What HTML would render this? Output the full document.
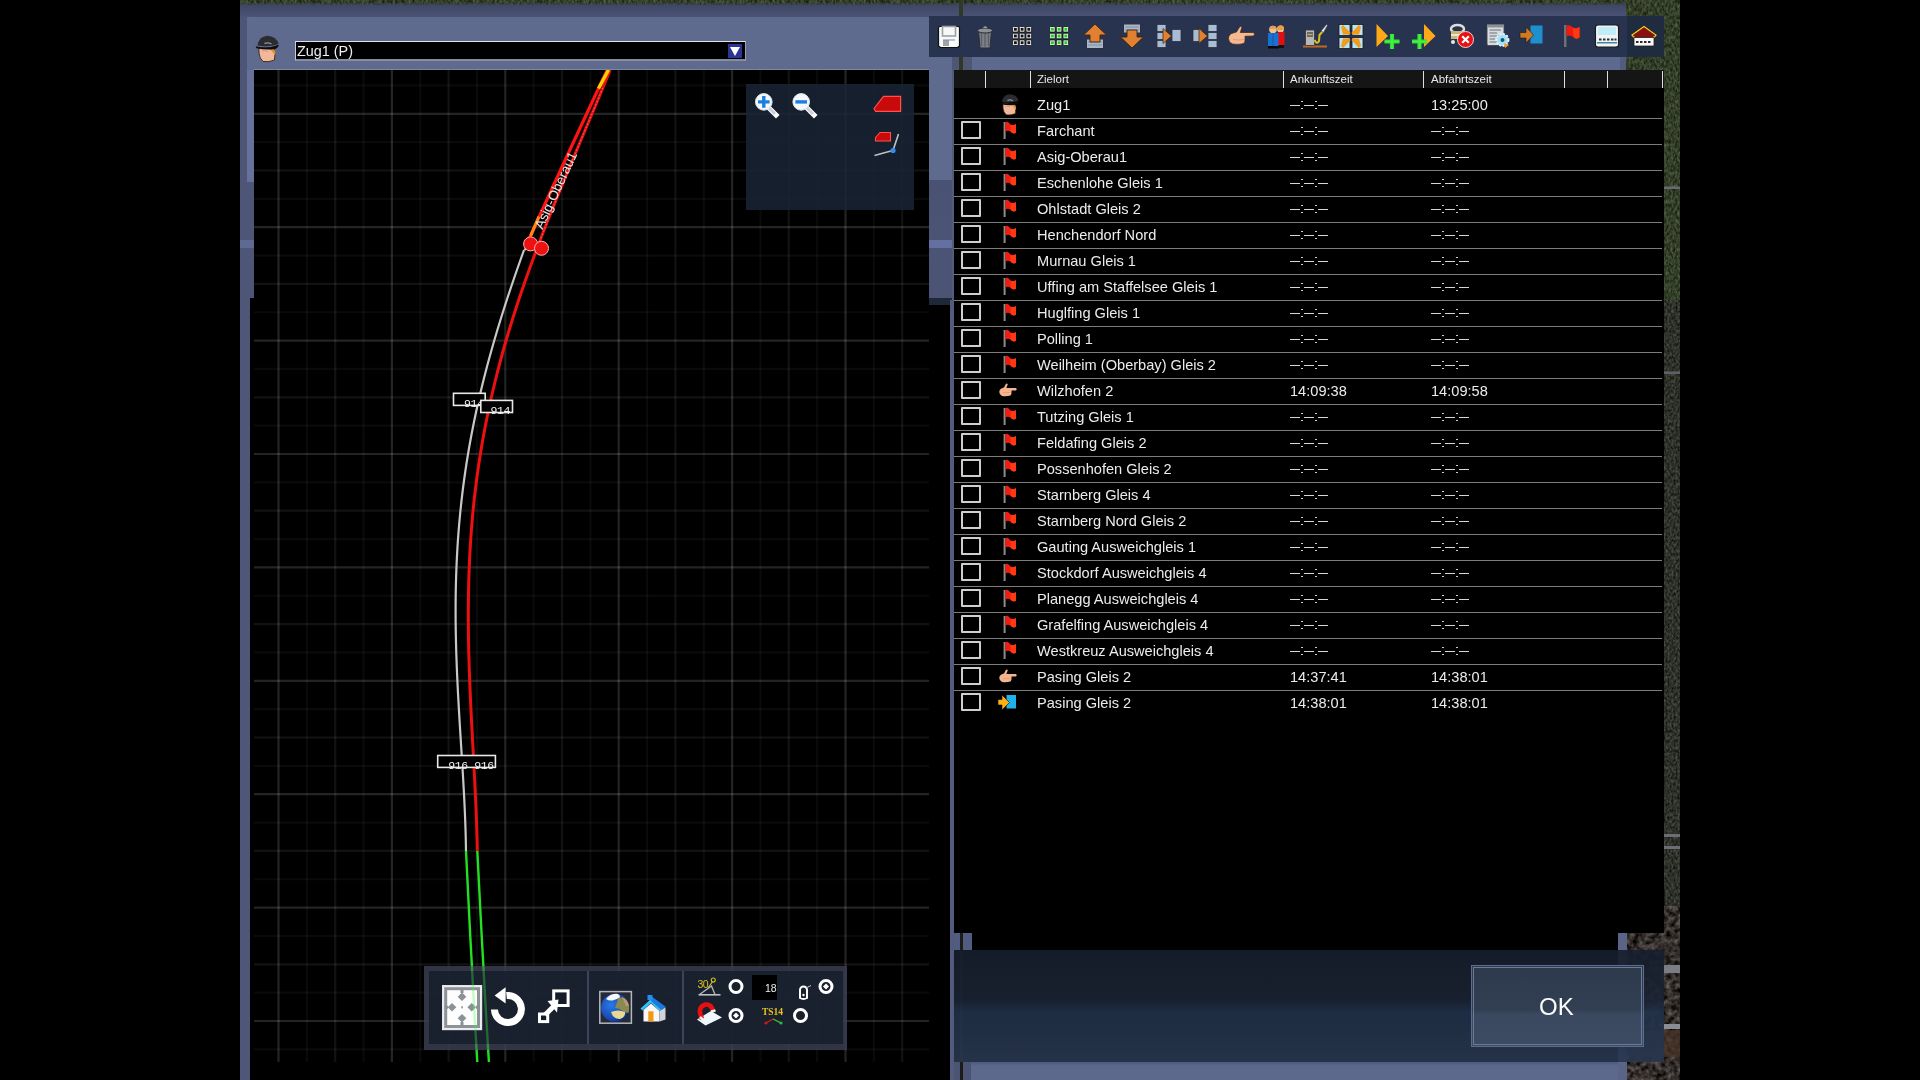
<!DOCTYPE html><html><head><meta charset="utf-8"><style>
*{margin:0;padding:0;box-sizing:border-box}
html,body{width:1920px;height:1080px;overflow:hidden;background:#000;font-family:"Liberation Sans",sans-serif}
.ab{position:absolute}
.dash{width:40px;height:12px}.dash i{position:absolute;top:4.8px;width:10px;height:1.3px;background:#d6d6d6}.dash u{position:absolute;width:2px;height:8.6px;top:0.6px;background:linear-gradient(#d0d0d0 0,#d0d0d0 1.5px,transparent 1.5px,transparent 7.1px,#d0d0d0 7.1px)}
.t{position:absolute;color:#ececec;white-space:nowrap;font-size:14.6px;line-height:16px}
</style></head><body>
<svg class="ab" style="left:0;top:0" width="1920" height="1080" viewBox="0 0 1920 1080">
<defs>
<filter id="fg" x="0" y="0" width="100%" height="100%" color-interpolation-filters="sRGB"><feTurbulence type="fractalNoise" baseFrequency="0.45 0.25" numOctaves="3" seed="7"/>
<feColorMatrix values="0.36 0 0 0 0.02  0.44 0 0 0 0.025  0.28 0 0 0 0.02  0 0 0 0 1"/></filter>
<filter id="fd" x="0" y="0" width="100%" height="100%" color-interpolation-filters="sRGB"><feTurbulence type="fractalNoise" baseFrequency="0.5 0.3" numOctaves="3" seed="11"/>
<feColorMatrix values="0.36 0 0 0 0.0  0.38 0 0 0 0.0  0.32 0 0 0 0.0  0 0 0 0 1"/></filter>
<filter id="fr" x="0" y="0" width="100%" height="100%" color-interpolation-filters="sRGB"><feTurbulence type="fractalNoise" baseFrequency="0.18" numOctaves="3" seed="5"/>
<feColorMatrix values="0.6 0 0 0 -0.1  0.56 0 0 0 -0.1  0.54 0 0 0 -0.1  0 0 0 0 1"/></filter>
</defs>
<rect x="240" y="0" width="1440" height="8" filter="url(#fg)"/>
<rect x="1620" y="0" width="60" height="300" filter="url(#fg)"/>
<rect x="1664" y="300" width="16" height="606" filter="url(#fd)"/>
<rect x="1664" y="906" width="16" height="30" filter="url(#fr)"/>
<rect x="1618" y="933" width="62" height="147" filter="url(#fr)"/>
<rect x="1664" y="186.5" width="16" height="2.5" fill="#666a70"/>
<rect x="1664" y="371.5" width="16" height="2.5" fill="#5e6268"/>
<rect x="1664" y="834" width="16" height="3" fill="#6a6e74"/>
<rect x="1664" y="846" width="16" height="3" fill="#6a6e74"/>
<rect x="1664" y="965" width="16" height="8" fill="#7a7e84"/>
<rect x="1664" y="1024" width="16" height="5" fill="#8a8e94"/>
<rect x="1626" y="1030" width="54" height="27" fill="#4a3428" opacity="0.7"/>
</svg><div class="ab" style="left:240px;top:2px;width:1386px;height:4px;background:linear-gradient(rgba(62,70,100,0),rgba(62,70,100,0.9))"></div><div class="ab" style="left:240px;top:5px;width:720px;height:12px;background:linear-gradient(#3f4766,#4a5374)"></div><div class="ab" style="left:240px;top:16px;width:14px;height:282px;background:linear-gradient(#4d5676 0,#4d5676 224px,#5e6a92 224px,#5e6a92 232px,#4d5676 232px)"></div><div class="ab" style="left:247px;top:17px;width:712px;height:53px;background:#5e6a8e"></div><div class="ab" style="left:247px;top:70px;width:7px;height:112px;background:#66729a"></div><div class="ab" style="left:240px;top:298px;width:10px;height:782px;background:#4e5778"></div><div class="ab" style="left:929px;top:57px;width:23px;height:248px;background:linear-gradient(#5e6a8e 0,#5e6a8e 123px,#4a5274 123px,#4c5476 183px,#6470a0 183px,#6470a0 191px,#4c5476 191px,#4c5476 241px,#1e2838 241px)"></div><div class="ab" style="left:952px;top:57px;width:2px;height:1023px;background:#525b7c"></div><div class="ab" style="left:950px;top:300px;width:4px;height:780px;background:#525b7c"></div><div class="ab" style="left:254px;top:69px;width:675px;height:1px;background:#7c87a6"></div><div class="ab" style="left:295px;top:41px;width:451px;height:20px;background:#000;border-top:1px solid #dfe2ea;border-left:1px solid #c8ccd8;border-right:1px solid #9aa0b4;border-bottom:2px solid #858ca4"></div><div class="t" style="left:297px;top:43px;font-size:14.4px;color:#f0f0f0">Zug1 (P)</div><div class="ab" style="left:728px;top:44px;width:14px;height:14px;background:#2c3494"></div><svg class="ab" style="left:728px;top:44px" width="14" height="14"><path d="M2 3 L12 3 L7 12 Z" fill="#fff"/></svg><svg class="ab" style="left:254px;top:70px" width="675" height="992" viewBox="254 70 675 992"><line x1="278.50" y1="70" x2="278.50" y2="1062" stroke="#242424" stroke-width="2.2"/><line x1="306.85" y1="70" x2="306.85" y2="1062" stroke="#0a0a0a" stroke-width="2.2"/><line x1="335.20" y1="70" x2="335.20" y2="1062" stroke="#121212" stroke-width="2.2"/><line x1="363.55" y1="70" x2="363.55" y2="1062" stroke="#0a0a0a" stroke-width="2.2"/><line x1="391.90" y1="70" x2="391.90" y2="1062" stroke="#242424" stroke-width="2.2"/><line x1="420.25" y1="70" x2="420.25" y2="1062" stroke="#0a0a0a" stroke-width="2.2"/><line x1="448.60" y1="70" x2="448.60" y2="1062" stroke="#121212" stroke-width="2.2"/><line x1="476.95" y1="70" x2="476.95" y2="1062" stroke="#0a0a0a" stroke-width="2.2"/><line x1="505.30" y1="70" x2="505.30" y2="1062" stroke="#242424" stroke-width="2.2"/><line x1="533.65" y1="70" x2="533.65" y2="1062" stroke="#0a0a0a" stroke-width="2.2"/><line x1="562.00" y1="70" x2="562.00" y2="1062" stroke="#121212" stroke-width="2.2"/><line x1="590.35" y1="70" x2="590.35" y2="1062" stroke="#0a0a0a" stroke-width="2.2"/><line x1="618.70" y1="70" x2="618.70" y2="1062" stroke="#242424" stroke-width="2.2"/><line x1="647.05" y1="70" x2="647.05" y2="1062" stroke="#0a0a0a" stroke-width="2.2"/><line x1="675.40" y1="70" x2="675.40" y2="1062" stroke="#121212" stroke-width="2.2"/><line x1="703.75" y1="70" x2="703.75" y2="1062" stroke="#0a0a0a" stroke-width="2.2"/><line x1="732.10" y1="70" x2="732.10" y2="1062" stroke="#242424" stroke-width="2.2"/><line x1="760.45" y1="70" x2="760.45" y2="1062" stroke="#0a0a0a" stroke-width="2.2"/><line x1="788.80" y1="70" x2="788.80" y2="1062" stroke="#121212" stroke-width="2.2"/><line x1="817.15" y1="70" x2="817.15" y2="1062" stroke="#0a0a0a" stroke-width="2.2"/><line x1="845.50" y1="70" x2="845.50" y2="1062" stroke="#242424" stroke-width="2.2"/><line x1="873.85" y1="70" x2="873.85" y2="1062" stroke="#0a0a0a" stroke-width="2.2"/><line x1="902.20" y1="70" x2="902.20" y2="1062" stroke="#121212" stroke-width="2.2"/><g style="mix-blend-mode:screen"><line x1="254" y1="85.45" x2="929" y2="85.45" stroke="#0a0a0a" stroke-width="2.2"/><line x1="254" y1="113.80" x2="929" y2="113.80" stroke="#242424" stroke-width="2.2"/><line x1="254" y1="142.15" x2="929" y2="142.15" stroke="#0a0a0a" stroke-width="2.2"/><line x1="254" y1="170.50" x2="929" y2="170.50" stroke="#121212" stroke-width="2.2"/><line x1="254" y1="198.85" x2="929" y2="198.85" stroke="#0a0a0a" stroke-width="2.2"/><line x1="254" y1="227.20" x2="929" y2="227.20" stroke="#242424" stroke-width="2.2"/><line x1="254" y1="255.55" x2="929" y2="255.55" stroke="#0a0a0a" stroke-width="2.2"/><line x1="254" y1="283.90" x2="929" y2="283.90" stroke="#121212" stroke-width="2.2"/><line x1="254" y1="312.25" x2="929" y2="312.25" stroke="#0a0a0a" stroke-width="2.2"/><line x1="254" y1="340.60" x2="929" y2="340.60" stroke="#242424" stroke-width="2.2"/><line x1="254" y1="368.95" x2="929" y2="368.95" stroke="#0a0a0a" stroke-width="2.2"/><line x1="254" y1="397.30" x2="929" y2="397.30" stroke="#121212" stroke-width="2.2"/><line x1="254" y1="425.65" x2="929" y2="425.65" stroke="#0a0a0a" stroke-width="2.2"/><line x1="254" y1="454.00" x2="929" y2="454.00" stroke="#242424" stroke-width="2.2"/><line x1="254" y1="482.35" x2="929" y2="482.35" stroke="#0a0a0a" stroke-width="2.2"/><line x1="254" y1="510.70" x2="929" y2="510.70" stroke="#121212" stroke-width="2.2"/><line x1="254" y1="539.05" x2="929" y2="539.05" stroke="#0a0a0a" stroke-width="2.2"/><line x1="254" y1="567.40" x2="929" y2="567.40" stroke="#242424" stroke-width="2.2"/><line x1="254" y1="595.75" x2="929" y2="595.75" stroke="#0a0a0a" stroke-width="2.2"/><line x1="254" y1="624.10" x2="929" y2="624.10" stroke="#121212" stroke-width="2.2"/><line x1="254" y1="652.45" x2="929" y2="652.45" stroke="#0a0a0a" stroke-width="2.2"/><line x1="254" y1="680.80" x2="929" y2="680.80" stroke="#242424" stroke-width="2.2"/><line x1="254" y1="709.15" x2="929" y2="709.15" stroke="#0a0a0a" stroke-width="2.2"/><line x1="254" y1="737.50" x2="929" y2="737.50" stroke="#121212" stroke-width="2.2"/><line x1="254" y1="765.85" x2="929" y2="765.85" stroke="#0a0a0a" stroke-width="2.2"/><line x1="254" y1="794.20" x2="929" y2="794.20" stroke="#242424" stroke-width="2.2"/><line x1="254" y1="822.55" x2="929" y2="822.55" stroke="#0a0a0a" stroke-width="2.2"/><line x1="254" y1="850.90" x2="929" y2="850.90" stroke="#121212" stroke-width="2.2"/><line x1="254" y1="879.25" x2="929" y2="879.25" stroke="#0a0a0a" stroke-width="2.2"/><line x1="254" y1="907.60" x2="929" y2="907.60" stroke="#242424" stroke-width="2.2"/><line x1="254" y1="935.95" x2="929" y2="935.95" stroke="#0a0a0a" stroke-width="2.2"/><line x1="254" y1="964.30" x2="929" y2="964.30" stroke="#121212" stroke-width="2.2"/><line x1="254" y1="992.65" x2="929" y2="992.65" stroke="#0a0a0a" stroke-width="2.2"/><line x1="254" y1="1021.00" x2="929" y2="1021.00" stroke="#242424" stroke-width="2.2"/><line x1="254" y1="1049.35" x2="929" y2="1049.35" stroke="#0a0a0a" stroke-width="2.2"/></g></svg><svg class="ab" style="left:254px;top:70px" width="675" height="992" viewBox="254 70 675 992" fill="none" stroke-linecap="butt"><path d="M610.11 70.00 L608.49 74.00 L606.87 78.00 L605.24 82.00 L603.60 86.00 L601.95 90.00 L600.29 94.00 L598.63 98.00 L596.97 102.00 L595.30 106.00 L593.62 110.00 L591.94 114.00 L590.26 118.00 L588.58 122.00 L586.89 126.00 L585.20 130.00 L583.52 134.00 L581.83 138.00 L580.14 142.00 L578.45 146.00 L576.77 150.00 L575.09 154.00 L573.40 158.00 L571.73 162.00 L570.05 166.00 L568.38 170.00 L566.71 174.00 L565.05 178.00 L563.39 182.00 L561.74 186.00 L560.10 190.00 L558.46 194.00 L556.83 198.00 L555.20 202.00 L553.59 206.00 L551.98 210.00 L550.38 214.00 L548.79 218.00 L547.21 222.00 L545.63 226.00 L544.07 230.00 L542.52 234.00 L540.98 238.00 L539.45 242.00 L537.93 246.00 L536.43 250.00 L534.93 254.00 L533.45 258.00 L531.98 262.00 L530.53 266.00 L529.08 270.00 L527.65 274.00 L526.24 278.00 L524.84 282.00 L523.45 286.00 L522.08 290.00 L520.72 294.00 L519.37 298.00 L518.05 302.00 L516.73 306.00 L515.44 310.00 L514.16 314.00 L512.89 318.00 L511.64 322.00 L510.41 326.00 L509.20 330.00 L508.00 334.00 L506.82 338.00 L505.65 342.00 L504.50 346.00 L503.37 350.00 L502.26 354.00 L501.17 358.00 L500.09 362.00 L499.03 366.00 L497.99 370.00 L496.96 374.00 L495.96 378.00 L494.97 382.00 L494.00 386.00 L493.05 390.00 L492.12 394.00 L491.21 398.00 L490.31 402.00 L489.43 406.00 L488.58 410.00 L487.74 414.00 L486.92 418.00 L486.11 422.00 L485.33 426.00 L484.57 430.00 L483.82 434.00 L483.09 438.00 L482.38 442.00 L481.69 446.00 L481.02 450.00 L480.37 454.00 L479.73 458.00 L479.12 462.00 L478.52 466.00 L477.94 470.00 L477.38 474.00 L476.84 478.00 L476.31 482.00 L475.81 486.00 L475.32 490.00 L474.85 494.00 L474.39 498.00 L473.96 502.00 L473.54 506.00 L473.14 510.00 L472.76 514.00 L472.39 518.00 L472.04 522.00 L471.71 526.00 L471.40 530.00 L471.10 534.00 L470.81 538.00 L470.55 542.00 L470.30 546.00 L470.06 550.00 L469.84 554.00 L469.64 558.00 L469.45 562.00 L469.28 566.00 L469.12 570.00 L468.98 574.00 L468.85 578.00 L468.74 582.00 L468.64 586.00 L468.55 590.00 L468.48 594.00 L468.42 598.00 L468.37 602.00 L468.33 606.00 L468.31 610.00 L468.30 614.00 L468.31 618.00 L468.32 622.00 L468.35 626.00 L468.38 630.00 L468.43 634.00 L468.49 638.00 L468.56 642.00 L468.64 646.00 L468.72 650.00 L468.82 654.00 L468.93 658.00 L469.04 662.00 L469.17 666.00 L469.30 670.00 L469.44 674.00 L469.58 678.00 L469.74 682.00 L469.90 686.00 L470.06 690.00 L470.24 694.00 L470.42 698.00 L470.60 702.00 L470.79 706.00 L470.98 710.00 L471.18 714.00 L471.38 718.00 L471.58 722.00 L471.79 726.00 L472.00 730.00 L472.21 734.00 L472.42 738.00 L472.63 742.00 L472.85 746.00 L473.06 750.00 L473.28 754.00 L473.50 758.00 L473.71 762.00 L473.92 766.00 L474.13 770.00 L474.34 774.00 L474.55 778.00 L474.75 782.00 L474.95 786.00 L475.15 790.00 L475.34 794.00 L475.53 798.00 L475.71 802.00 L475.88 806.00 L476.05 810.00 L476.22 814.00 L476.37 818.00 L476.52 822.00 L476.66 826.00 L476.79 830.00 L476.91 834.00 L477.02 838.00 L477.12 842.00 L477.22 846.00 L477.30 850.00 L477.31 851.00" stroke="#ee1010" stroke-width="3" stroke-linejoin="round"/><path d="M602.77 88.00 L601.12 92.00 L599.46 96.00 L597.80 100.00 L596.13 104.00 L594.46 108.00 L592.78 112.00 L591.10 116.00 L589.42 120.00 L587.74 124.00 L586.05 128.00 L584.36 132.00 L582.67 136.00 L580.99 140.00 L579.30 144.00 L577.61 148.00 L575.93 152.00 L574.24 156.00 L572.56 160.00 L570.89 164.00 L569.21 168.00 L567.55 172.00 L565.88 176.00 L564.22 180.00 L562.57 184.00 L560.92 188.00 L559.28 192.00 L557.64 196.00 L556.01 200.00 L554.39 204.00 L552.78 208.00 L551.18 212.00 L549.58 216.00 L548.00 220.00 L546.42 224.00 L544.85 228.00 L543.30 232.00 L541.75 236.00 L540.21 240.00 L538.69 244.00 L537.18 248.00 L536.43 250.00" stroke="#ffd0d0" stroke-width="0.8" stroke-dasharray="1.5 2" opacity="0.55"/><path d="M607.25 70.00 L605.36 74.00 L603.48 78.00 L601.59 82.00 L599.71 86.00 L597.83 90.00 L595.95 94.00 L594.08 98.00 L592.20 102.00 L590.33 106.00 L588.46 110.00 L586.59 114.00 L584.72 118.00 L582.86 122.00 L580.99 126.00 L579.13 130.00 L577.27 134.00 L575.41 138.00 L573.56 142.00 L571.70 146.00 L569.85 150.00 L568.00 154.00 L566.15 158.00 L564.30 162.00 L562.46 166.00 L560.61 170.00 L558.77 174.00 L556.93 178.00 L555.09 182.00 L553.26 186.00 L551.42 190.00 L549.59 194.00 L547.76 198.00 L545.93 202.00 L544.11 206.00 L542.28 210.00 L540.46 214.00 L538.64 218.00 L536.82 222.00 L535.00 226.00 L533.18 230.00 L531.37 234.00 L529.56 238.00 L527.75 242.00 L526.84 244.00" stroke="#ff1212" stroke-width="3.2" stroke-linejoin="round"/><path d="M530.6 244 L524.4 250" stroke="#c8c8c8" stroke-width="2.2"/><path d="M524.02 250.00 L522.58 254.00 L521.16 258.00 L519.74 262.00 L518.33 266.00 L516.93 270.00 L515.54 274.00 L514.17 278.00 L512.80 282.00 L511.45 286.00 L510.10 290.00 L508.77 294.00 L507.45 298.00 L506.15 302.00 L504.85 306.00 L503.57 310.00 L502.30 314.00 L501.05 318.00 L499.81 322.00 L498.58 326.00 L497.37 330.00 L496.18 334.00 L495.00 338.00 L493.83 342.00 L492.68 346.00 L491.54 350.00 L490.42 354.00 L489.32 358.00 L488.23 362.00 L487.16 366.00 L486.11 370.00 L485.07 374.00 L484.05 378.00 L483.05 382.00 L482.06 386.00 L481.09 390.00 L480.14 394.00 L479.21 398.00 L478.29 402.00 L477.39 406.00 L476.51 410.00 L475.65 414.00 L474.81 418.00 L473.98 422.00 L473.17 426.00 L472.39 430.00 L471.61 434.00 L470.86 438.00 L470.13 442.00 L469.41 446.00 L468.72 450.00 L468.04 454.00 L467.38 458.00 L466.74 462.00 L466.12 466.00 L465.52 470.00 L464.93 474.00 L464.37 478.00 L463.82 482.00 L463.29 486.00 L462.78 490.00 L462.29 494.00 L461.82 498.00 L461.36 502.00 L460.93 506.00 L460.51 510.00 L460.11 514.00 L459.73 518.00 L459.37 522.00 L459.02 526.00 L458.69 530.00 L458.38 534.00 L458.09 538.00 L457.81 542.00 L457.55 546.00 L457.31 550.00 L457.09 554.00 L456.88 558.00 L456.69 562.00 L456.51 566.00 L456.35 570.00 L456.21 574.00 L456.08 578.00 L455.97 582.00 L455.87 586.00 L455.79 590.00 L455.72 594.00 L455.67 598.00 L455.63 602.00 L455.61 606.00 L455.60 610.00 L455.60 614.00 L455.62 618.00 L455.65 622.00 L455.69 626.00 L455.75 630.00 L455.82 634.00 L455.90 638.00 L455.99 642.00 L456.09 646.00 L456.20 650.00 L456.32 654.00 L456.46 658.00 L456.60 662.00 L456.75 666.00 L456.91 670.00 L457.08 674.00 L457.26 678.00 L457.45 682.00 L457.64 686.00 L457.84 690.00 L458.05 694.00 L458.26 698.00 L458.48 702.00 L458.70 706.00 L458.93 710.00 L459.17 714.00 L459.40 718.00 L459.64 722.00 L459.89 726.00 L460.13 730.00 L460.38 734.00 L460.63 738.00 L460.88 742.00 L461.13 746.00 L461.39 750.00 L461.64 754.00 L461.89 758.00 L462.13 762.00 L462.38 766.00 L462.62 770.00 L462.86 774.00 L463.10 778.00 L463.33 782.00 L463.55 786.00 L463.77 790.00 L463.99 794.00 L464.20 798.00 L464.39 802.00 L464.59 806.00 L464.77 810.00 L464.94 814.00 L465.11 818.00 L465.26 822.00 L465.40 826.00 L465.53 830.00 L465.65 834.00 L465.75 838.00 L465.84 842.00 L465.91 846.00 L465.97 850.00 L465.98 851.00" stroke="#c8c8c8" stroke-width="2.2" stroke-linejoin="round"/><path d="M608.5 70 L598.5 88.5" stroke="#ffd000" stroke-width="3.4"/><path d="M538.9 216.7 L530.6 236" stroke="#ff8a10" stroke-width="3"/><path d="M466 851 Q471 956 477.3 1062" stroke="#22e022" stroke-width="2.4"/><path d="M477.3 851 Q482.5 956 488.9 1062" stroke="#22e022" stroke-width="2.4"/><circle cx="530.6" cy="243.9" r="7" fill="#ee1111" stroke="#ffb0b0" stroke-width="1"/><circle cx="541.5" cy="248.3" r="7" fill="#ee1111" stroke="#ffb0b0" stroke-width="1"/><text x="0" y="0" transform="translate(542.5,230) rotate(-65.2)" font-family="Liberation Sans" font-size="13.5" fill="#e6e6e6" stroke="none">Asig-Oberau1</text><rect x="453.5" y="393.3" width="31.69999999999999" height="12.099999999999966" fill="#000" stroke="#e8e8e8" stroke-width="1.6"/><text x="464" y="406.59999999999997" font-family="Liberation Mono" font-size="11.5" fill="#f4f4f4" stroke="none" letter-spacing="-0.4">914</text><rect x="480.8" y="400.4" width="31.69999999999999" height="12.100000000000023" fill="#000" stroke="#e8e8e8" stroke-width="1.6"/><text x="490.4" y="413.7" font-family="Liberation Mono" font-size="11.5" fill="#f4f4f4" stroke="none" letter-spacing="-0.4">914</text><rect x="437.7" y="755.5" width="57.69999999999999" height="11.899999999999977" fill="#000" stroke="#e8e8e8" stroke-width="1.6"/><text x="448.3" y="768.6" font-family="Liberation Mono" font-size="11.5" fill="#f4f4f4" stroke="none" letter-spacing="-0.4">916 916</text></svg><div class="ab" style="left:746px;top:84px;width:168px;height:126px;background:rgba(26,36,52,0.86)"></div><svg class="ab" style="left:746px;top:84px" width="168" height="126" viewBox="746 84 168 126">
<line x1="766" y1="105" x2="776" y2="115" stroke="#fff" stroke-width="5" stroke-linecap="square"/>
<line x1="767" y1="106" x2="775" y2="114" stroke="#c8d0d8" stroke-width="3"/>
<circle cx="763.8" cy="101.9" r="8.3" fill="#f4f8fb" stroke="#dde4ea" stroke-width="1"/>
<path d="M758 101.9 H769.6 M763.8 96.1 V107.7" stroke="#1a7fe0" stroke-width="3.4"/>
<line x1="804" y1="105" x2="814" y2="115" stroke="#fff" stroke-width="5" stroke-linecap="square"/>
<line x1="805" y1="106" x2="813" y2="114" stroke="#c8d0d8" stroke-width="3"/>
<circle cx="801.2" cy="101.9" r="8.3" fill="#f4f8fb" stroke="#dde4ea" stroke-width="1"/>
<path d="M795.4 101.9 H807" stroke="#1a7fe0" stroke-width="3.4"/>
<path d="M874 108.5 L883.5 96.3 L900.6 96.3 L900.6 111.3 L875.6 111.3 Z" fill="#c80a0a" stroke="#ff5050" stroke-width="1.2"/>
<path d="M875.5 137.5 L880 132.5 L890.5 132.5 L890.5 141 L875.5 141 Z" fill="#c80a0a" stroke="#ff5050" stroke-width="1.1"/>
<path d="M874.5 155.5 Q885 152.5 893 150.5 L898.5 134" stroke="#c0c0c0" stroke-width="1.6" fill="none"/>
<circle cx="893" cy="150.5" r="2.6" fill="#2f8ff0"/>
</svg><div class="ab" style="left:424px;top:966px;width:423px;height:84px;background:rgba(58,64,84,0.82)"></div><div class="ab" style="left:429px;top:971px;width:414px;height:73px;background:rgba(22,30,44,0.86)"></div><div class="ab" style="left:587px;top:971px;width:2px;height:73px;background:#3c4458"></div><div class="ab" style="left:682px;top:971px;width:2px;height:73px;background:#3c4458"></div><svg class="ab" style="left:424px;top:966px" width="423" height="84" viewBox="424 966 423 84">
<rect x="442.8" y="985.8" width="38.6" height="43.6" fill="#f4f4f6" stroke="#e4e6ea" stroke-width="1.6"/>
<rect x="445.7" y="988.7" width="32.8" height="37.8" fill="#fdfdfd" stroke="#8c9298" stroke-width="3"/>
<path d="M462 992.5 L466.3 996.8 L462 1001.1 L457.7 996.8 Z M462 1013.9 L466.3 1018.2 L462 1022.5 L457.7 1018.2 Z M447.7 1007.3 L452 1003 L456.3 1007.3 L452 1011.6 Z M467.4 1007.3 L471.7 1003 L476 1007.3 L471.7 1011.6 Z" fill="#8a9298"/>
<path d="M462 989 V993 M462 1022 V1026 M444.5 1007.3 H448 M476 1007.3 H479.5" stroke="#8a9298" stroke-width="3"/>
<rect x="461.2" y="1006.2" width="1.8" height="2.2" fill="#9aa0a4"/>
<path d="M494.4 1009.5 A13.5 13.5 0 1 0 506.5 995.6" stroke="#fff" stroke-width="7" fill="none"/>
<path d="M505.6 987.2 L494.6 995.4 L505.6 1003.4 Z" fill="#fff"/>
<rect x="539.5" y="1014" width="8.2" height="7.6" fill="#141c2a" stroke="#fff" stroke-width="3"/>
<rect x="553.7" y="990.9" width="14.4" height="14.6" fill="#141c2a" stroke="#fff" stroke-width="3"/>
<path d="M545 1015 L556 1004" stroke="#fff" stroke-width="5"/>
<path d="M547.5 1001 L558.5 999.5 L557 1012.5 Z" fill="#fff"/>
<defs><radialGradient id="oc" cx="0.35" cy="0.4" r="0.7"><stop offset="0" stop-color="#2a7ae8"/><stop offset="0.7" stop-color="#1848b0"/><stop offset="1" stop-color="#0c2470"/></radialGradient></defs>
<rect x="599.8" y="991.6" width="31.6" height="31.6" fill="#262a34" stroke="#b4b6bc" stroke-width="1.5"/>
<circle cx="615.2" cy="1007.9" r="14.2" fill="url(#oc)"/>
<path d="M606 999 Q610 993.5 617 993.7 Q621 995 619.5 998 L614 1000 Q610 1001.5 606 999 Z" fill="#f6f8fa"/>
<path d="M618 998 Q624 996 628 1002 Q630 1008 628.5 1013 L624 1012 Q619 1008 615 1008 Q617 1003 618 998 Z" fill="#8a8a50"/>
<path d="M622 997 Q627 999 629 1006 L626 1006 Q624 1001 622 997 Z" fill="#c09870"/>
<path d="M611 1012 Q618 1009 625 1012 Q626 1017 620 1019 Q613 1019 611 1012 Z" fill="#e8d890"/>
<path d="M641.5 1009.5 L651 1001 L660.5 1010" stroke="#30c0ff" stroke-width="3" fill="none"/>
<path d="M651 996 L666 1007 L661.5 1010 L651 1001 Z" fill="#1a7ae0"/>
<rect x="647.5" y="995" width="5" height="5" fill="#2090f0"/>
<path d="M643.5 1010 L651 1003.5 L659.5 1011 L659.5 1021.5 L643.5 1021.5 Z" fill="#f8f8f8"/>
<path d="M659.5 1011 L665.5 1007.5 L665.5 1019.5 L659.5 1021.5 Z" fill="#d0d4d8"/>
<rect x="648.3" y="1011.3" width="5.2" height="10.2" fill="#f09a10"/>
<path d="M699.5 994.5 L711.5 986 L715 994.5" stroke="#b8b8b8" stroke-width="1.3" fill="none"/>
<line x1="698.5" y1="994.8" x2="720.5" y2="994.8" stroke="#c0c0c0" stroke-width="1.6"/>
<text x="697.5" y="987.5" font-family="Liberation Sans" font-size="10.5" fill="#d8c020" letter-spacing="-0.5">30</text>
<circle cx="713.3" cy="980" r="2" fill="none" stroke="#d8c020" stroke-width="1.1"/>
<path d="M712.3 982 L708 988" stroke="#d8c020" stroke-width="1.2"/>
<path d="M697 1019.5 L711 1011 L722 1017.5 L705.5 1025.5 Z" fill="#f0f8fc"/>
<path d="M702 1019 Q696.5 1007 705.5 1004.5 Q711.5 1004 713 1011" stroke="#e81010" stroke-width="4.6" fill="none"/>
<path d="M700 1017 L704 1020.5" stroke="#f4f4f4" stroke-width="2.4"/>
<path d="M711 1011.5 L715.5 1010.5" stroke="#f4f4f4" stroke-width="2.4"/>
<circle cx="736" cy="986.5" r="6" fill="none" stroke="#fff" stroke-width="3"/>
<circle cx="736" cy="1015.5" r="6" fill="none" stroke="#fff" stroke-width="3"/>
<path d="M736 1012.5 L739 1015.5 L736 1018.5 L733 1015.5 Z" fill="#fff"/>
<circle cx="826" cy="986.5" r="6" fill="none" stroke="#fff" stroke-width="3"/>
<path d="M826 983.5 L829 986.5 L826 989.5 L823 986.5 Z" fill="#fff"/>
<circle cx="800.5" cy="1015.5" r="6" fill="none" stroke="#fff" stroke-width="3"/>
<rect x="752" y="975" width="25" height="25" fill="#000"/>
<text x="765" y="992" font-family="Liberation Sans" font-size="10.5" fill="#eee">18</text>
<text x="762" y="1015" font-family="Liberation Serif" font-size="9.5" font-weight="bold" fill="#e8c020">TS14</text>
<path d="M766 1023 L773 1019 L781 1023" stroke="#d01818" stroke-width="1.3" fill="none"/>
<path d="M773 1019 L781 1023" stroke="#20c040" stroke-width="1.3"/>
<circle cx="766" cy="1023" r="1.6" fill="#d01818"/><circle cx="781" cy="1023" r="1.6" fill="#20c040"/>
<path d="M800 990 A3.5 3.5 0 0 1 807 990 L807 998 Q803.5 1000 800 998 Z" fill="none" stroke="#fff" stroke-width="2"/>
<circle cx="803.5" cy="995" r="1.2" fill="#fff"/>
<line x1="806" y1="988" x2="811" y2="985.5" stroke="#ccc" stroke-width="1"/>
</svg><svg class="ab" style="left:424px;top:966px" width="423" height="84" viewBox="424 966 423 84"><path d="M466 851 Q471 956 477.3 1062" stroke="#40ff40" stroke-width="2.4" fill="none" opacity="0.3"/><path d="M477.3 851 Q482.5 956 488.9 1062" stroke="#40ff40" stroke-width="2.4" fill="none" opacity="0.3"/></svg><svg class="ab" style="left:254px;top:33px" width="30.0" height="30.0" viewBox="0 0 30 30"><path d="M5 14.5 L20 15.5 Q21.5 22 20.5 27 Q15 29.5 9 28.5 Q5.5 25.5 5 20 Z" fill="#f2b89a" stroke="#3a2418" stroke-width="0.9"/><path d="M15.5 14.8 Q20.5 15.2 21.5 19.5 L20.7 22.5 Q18.5 17.5 15 16 Z" fill="#e49020"/><path d="M8 18 Q11 17 14 18.5" stroke="#c88870" stroke-width="0.7" fill="none"/><path d="M3.5 12.5 Q5 3.5 13 2.7 Q22.5 3 24.5 11 Q15 14.5 3.5 12.5 Z" fill="#2a2c30"/><path d="M1.7 13.2 Q13 16.5 24.8 11.8 Q24.5 14.8 21 16 Q12 17.5 2.5 15.2 Z" fill="#0c0c0e"/><path d="M10.5 10.5 Q14 9 17.5 11" stroke="#8a92a2" stroke-width="1.4" fill="none"/></svg><div class="ab" style="left:963px;top:5px;width:663px;height:12px;background:linear-gradient(#3f4766,#4a5374)"></div><div class="ab" style="left:954px;top:16px;width:666px;height:54px;background:#5d698d"></div><div class="ab" style="left:1620px;top:16px;width:6px;height:54px;background:#525c7c"></div><div class="ab" style="left:952px;top:57px;width:20px;height:13px;background:#4e5674"></div><div class="ab" style="left:959px;top:0px;width:4px;height:70px;background:#2e3a26"></div><div class="ab" style="left:929px;top:16px;width:698px;height:41px;background:#28334f"></div><div class="ab" style="left:1627px;top:16px;width:37px;height:41px;background:#1f2b3e"></div><svg class="ab" style="left:935px;top:22px" width="28" height="28" viewBox="0 0 28 28"><path d="M3.5 6 Q3.5 4.5 5 4.5 L23 4.5 Q24.5 4.5 24.5 6 L24.5 24 L22.5 25.5 L5.5 25.5 L3.5 24 Z" fill="#f4fafc" stroke="#111" stroke-width="1.2"/>
<rect x="7.5" y="4.5" width="13" height="9.5" fill="#f8f8f8" stroke="#9aa0a4" stroke-width="1.6"/>
<rect x="8" y="18" width="12" height="6" fill="#fff"/><rect x="8" y="18" width="6" height="6" fill="#a0a4a8"/><rect x="8" y="17.5" width="12" height="1" fill="#889"/></svg><svg class="ab" style="left:971px;top:22px" width="28" height="28" viewBox="0 0 28 28"><path d="M7.5 9 L20.5 9 L19 26 L9 26 Z" fill="#7c8088" stroke="#2a2d33" stroke-width="1"/>
<path d="M10.5 11 V24 M14 11 V24.5 M17.5 11 V24" stroke="#5a5e66" stroke-width="1.3"/>
<ellipse cx="14" cy="8.5" rx="7.5" ry="2.5" fill="#8c9098" stroke="#2a2d33" stroke-width="1"/>
<path d="M11.5 6 Q14 1.5 17 6" fill="#9a9ea6" stroke="#2a2d33" stroke-width="0.8"/></svg><svg class="ab" style="left:1008px;top:22px" width="28" height="28" viewBox="0 0 28 28"><rect x="4.6" y="4.5" width="5.6" height="5.6" rx="1" fill="#f0f0f0" stroke="#101010" stroke-width="0.8"/><rect x="6.0" y="5.9" width="2.8" height="2.8" fill="#151515"/><rect x="11.3" y="4.5" width="5.6" height="5.6" rx="1" fill="#f0f0f0" stroke="#101010" stroke-width="0.8"/><rect x="12.7" y="5.9" width="2.8" height="2.8" fill="#151515"/><rect x="18.0" y="4.5" width="5.6" height="5.6" rx="1" fill="#f0f0f0" stroke="#101010" stroke-width="0.8"/><rect x="19.4" y="5.9" width="2.8" height="2.8" fill="#151515"/><rect x="4.6" y="11.2" width="5.6" height="5.6" rx="1" fill="#f0f0f0" stroke="#101010" stroke-width="0.8"/><rect x="6.0" y="12.6" width="2.8" height="2.8" fill="#151515"/><rect x="11.3" y="11.2" width="5.6" height="5.6" rx="1" fill="#f0f0f0" stroke="#101010" stroke-width="0.8"/><rect x="12.7" y="12.6" width="2.8" height="2.8" fill="#151515"/><rect x="18.0" y="11.2" width="5.6" height="5.6" rx="1" fill="#f0f0f0" stroke="#101010" stroke-width="0.8"/><rect x="19.4" y="12.6" width="2.8" height="2.8" fill="#151515"/><rect x="4.6" y="17.9" width="5.6" height="5.6" rx="1" fill="#f0f0f0" stroke="#101010" stroke-width="0.8"/><rect x="6.0" y="19.3" width="2.8" height="2.8" fill="#151515"/><rect x="11.3" y="17.9" width="5.6" height="5.6" rx="1" fill="#f0f0f0" stroke="#101010" stroke-width="0.8"/><rect x="12.7" y="19.3" width="2.8" height="2.8" fill="#151515"/><rect x="18.0" y="17.9" width="5.6" height="5.6" rx="1" fill="#f0f0f0" stroke="#101010" stroke-width="0.8"/><rect x="19.4" y="19.3" width="2.8" height="2.8" fill="#151515"/></svg><svg class="ab" style="left:1045px;top:22px" width="28" height="28" viewBox="0 0 28 28"><rect x="4.6" y="4.5" width="5.6" height="5.6" rx="1" fill="#d8f0d8" stroke="#101010" stroke-width="0.8"/><rect x="6.0" y="5.9" width="2.8" height="2.8" fill="#22d022"/><rect x="11.3" y="4.5" width="5.6" height="5.6" rx="1" fill="#d8f0d8" stroke="#101010" stroke-width="0.8"/><rect x="12.7" y="5.9" width="2.8" height="2.8" fill="#22d022"/><rect x="18.0" y="4.5" width="5.6" height="5.6" rx="1" fill="#d8f0d8" stroke="#101010" stroke-width="0.8"/><rect x="19.4" y="5.9" width="2.8" height="2.8" fill="#22d022"/><rect x="4.6" y="11.2" width="5.6" height="5.6" rx="1" fill="#d8f0d8" stroke="#101010" stroke-width="0.8"/><rect x="6.0" y="12.6" width="2.8" height="2.8" fill="#22d022"/><rect x="11.3" y="11.2" width="5.6" height="5.6" rx="1" fill="#d8f0d8" stroke="#101010" stroke-width="0.8"/><rect x="12.7" y="12.6" width="2.8" height="2.8" fill="#22d022"/><rect x="18.0" y="11.2" width="5.6" height="5.6" rx="1" fill="#d8f0d8" stroke="#101010" stroke-width="0.8"/><rect x="19.4" y="12.6" width="2.8" height="2.8" fill="#22d022"/><rect x="4.6" y="17.9" width="5.6" height="5.6" rx="1" fill="#d8f0d8" stroke="#101010" stroke-width="0.8"/><rect x="6.0" y="19.3" width="2.8" height="2.8" fill="#22d022"/><rect x="11.3" y="17.9" width="5.6" height="5.6" rx="1" fill="#d8f0d8" stroke="#101010" stroke-width="0.8"/><rect x="12.7" y="19.3" width="2.8" height="2.8" fill="#22d022"/><rect x="18.0" y="17.9" width="5.6" height="5.6" rx="1" fill="#d8f0d8" stroke="#101010" stroke-width="0.8"/><rect x="19.4" y="19.3" width="2.8" height="2.8" fill="#22d022"/></svg><svg class="ab" style="left:1081px;top:22px" width="28" height="28" viewBox="0 0 28 28"><rect x="5.5" y="17" width="17" height="9.5" fill="#a8b6c8" stroke="#2a3040" stroke-width="1"/>
<path d="M7 20 H21 M7 23 H21" stroke="#8090a4" stroke-width="1"/>
<path d="M14 2 L25.5 13 L19 13 L19 20 L9 20 L9 13 L2.5 13 Z" fill="#e08030" stroke="#3a2410" stroke-width="0.9"/></svg><svg class="ab" style="left:1118px;top:22px" width="28" height="28" viewBox="0 0 28 28"><rect x="5.5" y="2" width="17" height="9" fill="#a8b6c8" stroke="#2a3040" stroke-width="1"/>
<path d="M7 5 H21 M7 8 H21" stroke="#8090a4" stroke-width="1"/>
<path d="M14 26 L25.5 15 L19 15 L19 8 L9 8 L9 15 L2.5 15 Z" fill="#e08030" stroke="#3a2410" stroke-width="0.9"/></svg><svg class="ab" style="left:1155px;top:22px" width="28" height="28" viewBox="0 0 28 28"><rect x="2" y="2.5" width="9" height="7" fill="#a8bcd4" stroke="#2a3040" stroke-width="0.8"/>
<rect x="2" y="10.5" width="9" height="7" fill="#a8bcd4" stroke="#2a3040" stroke-width="0.8"/>
<rect x="2" y="18.5" width="9" height="7" fill="#a8bcd4" stroke="#2a3040" stroke-width="0.8"/>
<rect x="17" y="7.5" width="9" height="12" fill="#a8bcd4" stroke="#2a3040" stroke-width="0.8"/>
<path d="M8 6.5 L16.5 14 L8 21.5 Z" fill="#e08030" stroke="#3a2410" stroke-width="0.7"/></svg><svg class="ab" style="left:1191px;top:22px" width="28" height="28" viewBox="0 0 28 28"><rect x="2" y="7.5" width="9" height="12" fill="#a8bcd4" stroke="#2a3040" stroke-width="0.8"/>
<rect x="17" y="2.5" width="9" height="7" fill="#a8bcd4" stroke="#2a3040" stroke-width="0.8"/>
<rect x="17" y="10.5" width="9" height="7" fill="#a8bcd4" stroke="#2a3040" stroke-width="0.8"/>
<rect x="17" y="18.5" width="9" height="7" fill="#a8bcd4" stroke="#2a3040" stroke-width="0.8"/>
<path d="M8 6.5 L16.5 14 L8 21.5 Z" fill="#e08030" stroke="#3a2410" stroke-width="0.7"/></svg><svg class="ab" style="left:1227px;top:22px" width="28" height="28" viewBox="0 0 28 28"><path d="M1.5 16.5 Q1.5 12 6 11 L9.5 10 L12.5 5 Q14 3.5 15 5 L13.3 10.5 L26.5 10.5 Q28.5 12.2 26.5 14 L18 14.2 Q18.5 19.5 17 21.5 Q11 23 5.5 22 Q1.5 20.5 1.5 16.5 Z" fill="#f6b890" stroke="#3a2418" stroke-width="0.7"/>
<path d="M6 17.5 Q11 18.5 17 17.5" stroke="#d08a70" stroke-width="0.6" fill="none"/></svg><svg class="ab" style="left:1263px;top:22px" width="28" height="28" viewBox="0 0 28 28"><circle cx="17.5" cy="7" r="3.5" fill="#f0c090"/><path d="M14.5 5 Q17.5 1.5 21 5 L21 8 L14.5 8 Z" fill="#e8a040"/>
<rect x="14.5" y="10" width="7" height="13" fill="#e01010"/><rect x="15" y="23" width="6" height="3" fill="#111"/>
<circle cx="10" cy="7.5" r="3.8" fill="#f0c090"/><path d="M6.5 6 Q10 1.5 13.5 6 L13.5 7 L6.5 7 Z" fill="#e0a050"/>
<rect x="5" y="11" width="10.5" height="13.5" fill="#1a70d0"/><path d="M10 11 V24" stroke="#1050a0" stroke-width="0.8"/>
<rect x="5" y="24" width="11" height="2.5" fill="#0a0a0a"/></svg><svg class="ab" style="left:1301px;top:22px" width="28" height="28" viewBox="0 0 28 28"><rect x="2" y="23.5" width="24" height="2" fill="#c06820"/>
<rect x="4.5" y="8" width="9" height="15.5" rx="1" fill="#b8b8b8" stroke="#3a3a3a" stroke-width="0.9"/>
<rect x="6" y="10" width="6" height="5" fill="#706a5a"/><path d="M6.5 12.5 H11.5" stroke="#c8c0a0" stroke-width="0.8"/>
<path d="M13.5 18 Q16 23 18 19 L18.5 13 L22 9" stroke="#d8c020" stroke-width="2" fill="none"/>
<path d="M20 9 L25.5 2.5 L26.5 3.5 L22.5 10.5 Z" fill="#e8e8e8" stroke="#444" stroke-width="0.7"/></svg><svg class="ab" style="left:1337px;top:22px" width="28" height="28" viewBox="0 0 28 28"><rect x="2" y="2.5" width="11" height="11" fill="#b8e4f4" stroke="#1a1a1a" stroke-width="0.8"/>
<rect x="15" y="2.5" width="11" height="11" fill="#b8e4f4" stroke="#1a1a1a" stroke-width="0.8"/>
<rect x="2" y="15.5" width="11" height="11" fill="#b8e4f4" stroke="#1a1a1a" stroke-width="0.8"/>
<rect x="15" y="15.5" width="11" height="11" fill="#b8e4f4" stroke="#1a1a1a" stroke-width="0.8"/>
<path d="M4 5 L12 12.5 L6 12.5 Z M24 5 L16 12.5 L22 12.5 Z M4 24 L12 16.5 L6 16.5 Z M24 24 L16 16.5 L22 16.5 Z" fill="#f09a20"/>
<path d="M5 4 L12.5 12 M23 4 L15.5 12 M5 25 L12.5 17 M23 25 L15.5 17" stroke="#f09a20" stroke-width="3"/></svg><svg class="ab" style="left:1374px;top:22px" width="28" height="28" viewBox="0 0 28 28"><path d="M2.5 2 L14 14 L2.5 25 Z" fill="#ffa818"/>
<path d="M18 12 V27 M10.5 19.5 H25.5" stroke="#30e030" stroke-width="4.2"/>
<path d="M18 12 V27 M10.5 19.5 H25.5" stroke="#58ff58" stroke-width="1.5" opacity="0.6"/></svg><svg class="ab" style="left:1410px;top:22px" width="28" height="28" viewBox="0 0 28 28"><path d="M14 2 L25.5 14 L14 25 Z" fill="#ffa818"/>
<path d="M9.5 12 V27 M2 19.5 H17" stroke="#30e030" stroke-width="4.2"/>
<path d="M9.5 12 V27 M2 19.5 H17" stroke="#58ff58" stroke-width="1.5" opacity="0.6"/></svg><svg class="ab" style="left:1447px;top:22px" width="28" height="28" viewBox="0 0 28 28"><ellipse cx="10.5" cy="7" rx="6.5" ry="4" fill="none" stroke="#d8dde0" stroke-width="2.5"/>
<rect x="4" y="9" width="13" height="8" fill="#c8b870"/><rect x="4" y="12" width="13" height="2" fill="#e8e8d8"/>
<circle cx="6" cy="20" r="2" fill="#e8e8e8"/>
<circle cx="18.5" cy="17.5" r="8" fill="#e81010" stroke="#fff" stroke-width="0.8"/>
<path d="M15.2 14.2 L21.8 20.8 M21.8 14.2 L15.2 20.8" stroke="#fff" stroke-width="2.2"/></svg><svg class="ab" style="left:1485px;top:22px" width="28" height="28" viewBox="0 0 28 28"><rect x="2" y="2.5" width="17" height="21" rx="1.5" fill="#d8dce0" stroke="#444" stroke-width="0.9"/>
<rect x="2" y="2.5" width="17" height="3" fill="#8a9096"/>
<path d="M4.5 8 H16 M4.5 11 H12 M4.5 14 H14 M4.5 17 H10 M4.5 20 H12" stroke="#6a7076" stroke-width="1"/>
<circle cx="17.5" cy="18" r="6" fill="#a8e0f8" stroke="#e8f8ff" stroke-width="1.8" stroke-dasharray="2 1.5"/>
<circle cx="17.5" cy="18" r="2" fill="#0a5a80"/>
<path d="M19 21 L24 23 L20 26 Z" fill="#ff9a20"/></svg><svg class="ab" style="left:1518px;top:22px" width="28" height="28" viewBox="0 0 28 28"><rect x="12.5" y="3.5" width="12" height="18" fill="#1e90d0"/>
<path d="M2 10.5 L8 10.5 L8 5 L15.5 13 L8 21 L8 16 L2 16 Z" fill="#d07a20" stroke="#1a1a1a" stroke-width="0.6"/></svg><svg class="ab" style="left:1558px;top:22px" width="28" height="28" viewBox="0 0 28 28"><rect x="6" y="3" width="2.5" height="22" fill="#707070"/>
<path d="M8.5 3.5 Q12 2.5 15 5.5 Q17.5 7.5 21.5 5 L21.5 15.5 Q18 18 15.5 15 Q12 12.5 8.5 14 Z" fill="#f01a10"/>
<path d="M15 5.5 Q17.5 7.5 21.5 5 L21.5 15.5 Q18 18 15.5 15 Z" fill="#ff3a10"/></svg><svg class="ab" style="left:1593px;top:22px" width="28" height="28" viewBox="0 0 28 28"><path d="M2.5 5.5 Q2.5 3 5 3 L23 3 Q25.5 3 25.5 5.5 L25.5 23 Q25.5 25 23 25 L5 25 Q2.5 25 2.5 23 Z" fill="#f0f4f6" stroke="#1a1a1a" stroke-width="1.1"/>
<rect x="5" y="5" width="18" height="8" fill="#c0eef8"/>
<rect x="6" y="16.5" width="2.5" height="2" fill="#2a2a2a"/><rect x="10" y="16.5" width="2.5" height="2" fill="#2a2a2a"/><rect x="14" y="16.5" width="2.5" height="2" fill="#2a2a2a"/><rect x="18" y="16.5" width="2.5" height="2" fill="#2a2a2a"/><rect x="21.5" y="16.5" width="2" height="2" fill="#2a2a2a"/>
<rect x="4" y="20" width="20" height="1.5" fill="#3a8aa0"/></svg><svg class="ab" style="left:1630px;top:22px" width="28" height="28" viewBox="0 0 28 28"><path d="M2 13 L14 4.5 L26 13 L24 15.5 L14 10 L4 15.5 Z" fill="#8a1010" stroke="#f0d020" stroke-width="1.2"/>
<path d="M5 13 L14 7.5 L23 13 L23 15 L5 15 Z" fill="#8a1010"/>
<rect x="4" y="15.5" width="20" height="8.5" fill="#f8f8f8" stroke="#222" stroke-width="0.8"/>
<rect x="6" y="19" width="2.5" height="2" fill="#2a2a2a"/><rect x="10" y="19" width="2.5" height="2" fill="#2a2a2a"/><rect x="14" y="19" width="2.5" height="2" fill="#2a2a2a"/><rect x="18" y="19" width="2.5" height="2" fill="#2a2a2a"/></svg><div class="ab" style="left:954px;top:70px;width:710px;height:19px;background:#151515"></div><div class="ab" style="left:954px;top:88px;width:710px;height:845px;background:#000"></div><div class="ab" style="left:985px;top:71px;width:1.4px;height:17px;background:#e0e0e0"></div><div class="ab" style="left:1030px;top:71px;width:1.4px;height:17px;background:#e0e0e0"></div><div class="ab" style="left:1283px;top:71px;width:1.4px;height:17px;background:#e0e0e0"></div><div class="ab" style="left:1423px;top:71px;width:1.4px;height:17px;background:#e0e0e0"></div><div class="ab" style="left:1564px;top:71px;width:1.4px;height:17px;background:#e0e0e0"></div><div class="ab" style="left:1607px;top:71px;width:1.4px;height:17px;background:#e0e0e0"></div><div class="ab" style="left:1662px;top:71px;width:1.4px;height:17px;background:#e0e0e0"></div><div class="t" style="left:1037px;top:72px;font-size:11.5px;line-height:14px;color:#e8e8e8">Zielort</div><div class="t" style="left:1290px;top:72px;font-size:11.5px;line-height:14px;color:#e8e8e8">Ankunftszeit</div><div class="t" style="left:1431px;top:72px;font-size:11.5px;line-height:14px;color:#e8e8e8">Abfahrtszeit</div><div class="ab" style="left:954px;top:118px;width:708px;height:1px;background:#7d7d7d"></div><div class="t" style="left:1037px;top:97px">Zug1</div><div class="ab dash" style="left:1290px;top:100px"><i style="left:0"></i><u style="left:11px"></u><i style="left:14px"></i><u style="left:25px"></u><i style="left:28px"></i></div><div class="t" style="left:1431px;top:97px">13:25:00</div><svg class="ab" style="left:998.6px;top:92px" width="24.0" height="24.0" viewBox="0 0 30 30"><path d="M5 14.5 L20 15.5 Q21.5 22 20.5 27 Q15 29.5 9 28.5 Q5.5 25.5 5 20 Z" fill="#f2b89a" stroke="#3a2418" stroke-width="0.9"/><path d="M15.5 14.8 Q20.5 15.2 21.5 19.5 L20.7 22.5 Q18.5 17.5 15 16 Z" fill="#e49020"/><path d="M8 18 Q11 17 14 18.5" stroke="#c88870" stroke-width="0.7" fill="none"/><path d="M3.5 12.5 Q5 3.5 13 2.7 Q22.5 3 24.5 11 Q15 14.5 3.5 12.5 Z" fill="#2a2c30"/><path d="M1.7 13.2 Q13 16.5 24.8 11.8 Q24.5 14.8 21 16 Q12 17.5 2.5 15.2 Z" fill="#0c0c0e"/><path d="M10.5 10.5 Q14 9 17.5 11" stroke="#8a92a2" stroke-width="1.4" fill="none"/></svg><div class="ab" style="left:954px;top:144px;width:708px;height:1px;background:#7d7d7d"></div><div class="t" style="left:1037px;top:123px">Farchant</div><div class="ab dash" style="left:1290px;top:126px"><i style="left:0"></i><u style="left:11px"></u><i style="left:14px"></i><u style="left:25px"></u><i style="left:28px"></i></div><div class="ab dash" style="left:1431px;top:126px"><i style="left:0"></i><u style="left:11px"></u><i style="left:14px"></i><u style="left:25px"></u><i style="left:28px"></i></div><div class="ab" style="left:961px;top:121px;width:20px;height:18px;border:2px solid #cfcfcf;border-radius:1px"></div><svg class="ab" style="left:990px;top:116px" width="30" height="30" viewBox="0 0 30 30"><rect x="13.6" y="6" width="2" height="17" fill="#8c8c8c"/><path d="M15.5 6 Q18 5 20 8 Q22 10 26 8.2 L26 16.8 Q23 18.5 20.5 15.5 Q18 14 15.5 15.4 Z" fill="#f21c10"/><path d="M20.5 9 Q22.5 10 26 8.2 L26 16.8 Q23 18.5 20.5 15.5 Z" fill="#ff3a12"/></svg><div class="ab" style="left:954px;top:170px;width:708px;height:1px;background:#7d7d7d"></div><div class="t" style="left:1037px;top:149px">Asig-Oberau1</div><div class="ab dash" style="left:1290px;top:152px"><i style="left:0"></i><u style="left:11px"></u><i style="left:14px"></i><u style="left:25px"></u><i style="left:28px"></i></div><div class="ab dash" style="left:1431px;top:152px"><i style="left:0"></i><u style="left:11px"></u><i style="left:14px"></i><u style="left:25px"></u><i style="left:28px"></i></div><div class="ab" style="left:961px;top:147px;width:20px;height:18px;border:2px solid #cfcfcf;border-radius:1px"></div><svg class="ab" style="left:990px;top:142px" width="30" height="30" viewBox="0 0 30 30"><rect x="13.6" y="6" width="2" height="17" fill="#8c8c8c"/><path d="M15.5 6 Q18 5 20 8 Q22 10 26 8.2 L26 16.8 Q23 18.5 20.5 15.5 Q18 14 15.5 15.4 Z" fill="#f21c10"/><path d="M20.5 9 Q22.5 10 26 8.2 L26 16.8 Q23 18.5 20.5 15.5 Z" fill="#ff3a12"/></svg><div class="ab" style="left:954px;top:196px;width:708px;height:1px;background:#7d7d7d"></div><div class="t" style="left:1037px;top:175px">Eschenlohe Gleis 1</div><div class="ab dash" style="left:1290px;top:178px"><i style="left:0"></i><u style="left:11px"></u><i style="left:14px"></i><u style="left:25px"></u><i style="left:28px"></i></div><div class="ab dash" style="left:1431px;top:178px"><i style="left:0"></i><u style="left:11px"></u><i style="left:14px"></i><u style="left:25px"></u><i style="left:28px"></i></div><div class="ab" style="left:961px;top:173px;width:20px;height:18px;border:2px solid #cfcfcf;border-radius:1px"></div><svg class="ab" style="left:990px;top:168px" width="30" height="30" viewBox="0 0 30 30"><rect x="13.6" y="6" width="2" height="17" fill="#8c8c8c"/><path d="M15.5 6 Q18 5 20 8 Q22 10 26 8.2 L26 16.8 Q23 18.5 20.5 15.5 Q18 14 15.5 15.4 Z" fill="#f21c10"/><path d="M20.5 9 Q22.5 10 26 8.2 L26 16.8 Q23 18.5 20.5 15.5 Z" fill="#ff3a12"/></svg><div class="ab" style="left:954px;top:222px;width:708px;height:1px;background:#7d7d7d"></div><div class="t" style="left:1037px;top:201px">Ohlstadt Gleis 2</div><div class="ab dash" style="left:1290px;top:204px"><i style="left:0"></i><u style="left:11px"></u><i style="left:14px"></i><u style="left:25px"></u><i style="left:28px"></i></div><div class="ab dash" style="left:1431px;top:204px"><i style="left:0"></i><u style="left:11px"></u><i style="left:14px"></i><u style="left:25px"></u><i style="left:28px"></i></div><div class="ab" style="left:961px;top:199px;width:20px;height:18px;border:2px solid #cfcfcf;border-radius:1px"></div><svg class="ab" style="left:990px;top:194px" width="30" height="30" viewBox="0 0 30 30"><rect x="13.6" y="6" width="2" height="17" fill="#8c8c8c"/><path d="M15.5 6 Q18 5 20 8 Q22 10 26 8.2 L26 16.8 Q23 18.5 20.5 15.5 Q18 14 15.5 15.4 Z" fill="#f21c10"/><path d="M20.5 9 Q22.5 10 26 8.2 L26 16.8 Q23 18.5 20.5 15.5 Z" fill="#ff3a12"/></svg><div class="ab" style="left:954px;top:248px;width:708px;height:1px;background:#7d7d7d"></div><div class="t" style="left:1037px;top:227px">Henchendorf Nord</div><div class="ab dash" style="left:1290px;top:230px"><i style="left:0"></i><u style="left:11px"></u><i style="left:14px"></i><u style="left:25px"></u><i style="left:28px"></i></div><div class="ab dash" style="left:1431px;top:230px"><i style="left:0"></i><u style="left:11px"></u><i style="left:14px"></i><u style="left:25px"></u><i style="left:28px"></i></div><div class="ab" style="left:961px;top:225px;width:20px;height:18px;border:2px solid #cfcfcf;border-radius:1px"></div><svg class="ab" style="left:990px;top:220px" width="30" height="30" viewBox="0 0 30 30"><rect x="13.6" y="6" width="2" height="17" fill="#8c8c8c"/><path d="M15.5 6 Q18 5 20 8 Q22 10 26 8.2 L26 16.8 Q23 18.5 20.5 15.5 Q18 14 15.5 15.4 Z" fill="#f21c10"/><path d="M20.5 9 Q22.5 10 26 8.2 L26 16.8 Q23 18.5 20.5 15.5 Z" fill="#ff3a12"/></svg><div class="ab" style="left:954px;top:274px;width:708px;height:1px;background:#7d7d7d"></div><div class="t" style="left:1037px;top:253px">Murnau Gleis 1</div><div class="ab dash" style="left:1290px;top:256px"><i style="left:0"></i><u style="left:11px"></u><i style="left:14px"></i><u style="left:25px"></u><i style="left:28px"></i></div><div class="ab dash" style="left:1431px;top:256px"><i style="left:0"></i><u style="left:11px"></u><i style="left:14px"></i><u style="left:25px"></u><i style="left:28px"></i></div><div class="ab" style="left:961px;top:251px;width:20px;height:18px;border:2px solid #cfcfcf;border-radius:1px"></div><svg class="ab" style="left:990px;top:246px" width="30" height="30" viewBox="0 0 30 30"><rect x="13.6" y="6" width="2" height="17" fill="#8c8c8c"/><path d="M15.5 6 Q18 5 20 8 Q22 10 26 8.2 L26 16.8 Q23 18.5 20.5 15.5 Q18 14 15.5 15.4 Z" fill="#f21c10"/><path d="M20.5 9 Q22.5 10 26 8.2 L26 16.8 Q23 18.5 20.5 15.5 Z" fill="#ff3a12"/></svg><div class="ab" style="left:954px;top:300px;width:708px;height:1px;background:#7d7d7d"></div><div class="t" style="left:1037px;top:279px">Uffing am Staffelsee Gleis 1</div><div class="ab dash" style="left:1290px;top:282px"><i style="left:0"></i><u style="left:11px"></u><i style="left:14px"></i><u style="left:25px"></u><i style="left:28px"></i></div><div class="ab dash" style="left:1431px;top:282px"><i style="left:0"></i><u style="left:11px"></u><i style="left:14px"></i><u style="left:25px"></u><i style="left:28px"></i></div><div class="ab" style="left:961px;top:277px;width:20px;height:18px;border:2px solid #cfcfcf;border-radius:1px"></div><svg class="ab" style="left:990px;top:272px" width="30" height="30" viewBox="0 0 30 30"><rect x="13.6" y="6" width="2" height="17" fill="#8c8c8c"/><path d="M15.5 6 Q18 5 20 8 Q22 10 26 8.2 L26 16.8 Q23 18.5 20.5 15.5 Q18 14 15.5 15.4 Z" fill="#f21c10"/><path d="M20.5 9 Q22.5 10 26 8.2 L26 16.8 Q23 18.5 20.5 15.5 Z" fill="#ff3a12"/></svg><div class="ab" style="left:954px;top:326px;width:708px;height:1px;background:#7d7d7d"></div><div class="t" style="left:1037px;top:305px">Huglfing Gleis 1</div><div class="ab dash" style="left:1290px;top:308px"><i style="left:0"></i><u style="left:11px"></u><i style="left:14px"></i><u style="left:25px"></u><i style="left:28px"></i></div><div class="ab dash" style="left:1431px;top:308px"><i style="left:0"></i><u style="left:11px"></u><i style="left:14px"></i><u style="left:25px"></u><i style="left:28px"></i></div><div class="ab" style="left:961px;top:303px;width:20px;height:18px;border:2px solid #cfcfcf;border-radius:1px"></div><svg class="ab" style="left:990px;top:298px" width="30" height="30" viewBox="0 0 30 30"><rect x="13.6" y="6" width="2" height="17" fill="#8c8c8c"/><path d="M15.5 6 Q18 5 20 8 Q22 10 26 8.2 L26 16.8 Q23 18.5 20.5 15.5 Q18 14 15.5 15.4 Z" fill="#f21c10"/><path d="M20.5 9 Q22.5 10 26 8.2 L26 16.8 Q23 18.5 20.5 15.5 Z" fill="#ff3a12"/></svg><div class="ab" style="left:954px;top:352px;width:708px;height:1px;background:#7d7d7d"></div><div class="t" style="left:1037px;top:331px">Polling 1</div><div class="ab dash" style="left:1290px;top:334px"><i style="left:0"></i><u style="left:11px"></u><i style="left:14px"></i><u style="left:25px"></u><i style="left:28px"></i></div><div class="ab dash" style="left:1431px;top:334px"><i style="left:0"></i><u style="left:11px"></u><i style="left:14px"></i><u style="left:25px"></u><i style="left:28px"></i></div><div class="ab" style="left:961px;top:329px;width:20px;height:18px;border:2px solid #cfcfcf;border-radius:1px"></div><svg class="ab" style="left:990px;top:324px" width="30" height="30" viewBox="0 0 30 30"><rect x="13.6" y="6" width="2" height="17" fill="#8c8c8c"/><path d="M15.5 6 Q18 5 20 8 Q22 10 26 8.2 L26 16.8 Q23 18.5 20.5 15.5 Q18 14 15.5 15.4 Z" fill="#f21c10"/><path d="M20.5 9 Q22.5 10 26 8.2 L26 16.8 Q23 18.5 20.5 15.5 Z" fill="#ff3a12"/></svg><div class="ab" style="left:954px;top:378px;width:708px;height:1px;background:#7d7d7d"></div><div class="t" style="left:1037px;top:357px">Weilheim (Oberbay) Gleis 2</div><div class="ab dash" style="left:1290px;top:360px"><i style="left:0"></i><u style="left:11px"></u><i style="left:14px"></i><u style="left:25px"></u><i style="left:28px"></i></div><div class="ab dash" style="left:1431px;top:360px"><i style="left:0"></i><u style="left:11px"></u><i style="left:14px"></i><u style="left:25px"></u><i style="left:28px"></i></div><div class="ab" style="left:961px;top:355px;width:20px;height:18px;border:2px solid #cfcfcf;border-radius:1px"></div><svg class="ab" style="left:990px;top:350px" width="30" height="30" viewBox="0 0 30 30"><rect x="13.6" y="6" width="2" height="17" fill="#8c8c8c"/><path d="M15.5 6 Q18 5 20 8 Q22 10 26 8.2 L26 16.8 Q23 18.5 20.5 15.5 Q18 14 15.5 15.4 Z" fill="#f21c10"/><path d="M20.5 9 Q22.5 10 26 8.2 L26 16.8 Q23 18.5 20.5 15.5 Z" fill="#ff3a12"/></svg><div class="ab" style="left:954px;top:404px;width:708px;height:1px;background:#7d7d7d"></div><div class="t" style="left:1037px;top:383px">Wilzhofen 2</div><div class="t" style="left:1290px;top:383px">14:09:38</div><div class="t" style="left:1431px;top:383px">14:09:58</div><div class="ab" style="left:961px;top:381px;width:20px;height:18px;border:2px solid #cfcfcf;border-radius:1px"></div><svg class="ab" style="left:990px;top:376px" width="30" height="30" viewBox="0 0 30 30"><path d="M9.3 16 Q9.3 12.8 12.8 12 L14.2 11.2 L15.8 8 Q17 6.8 17.8 8.2 L16.3 12 L26 12 Q27.6 13.1 26 14.4 L21.6 14.6 Q21.8 18.2 20.5 19.6 Q16 20.6 12 20 Q9.3 18.8 9.3 16 Z" fill="#f4b48e"/><path d="M13 16.5 Q16 17 20 16.5" stroke="#d88a70" stroke-width="0.6" fill="none"/></svg><div class="ab" style="left:954px;top:430px;width:708px;height:1px;background:#7d7d7d"></div><div class="t" style="left:1037px;top:409px">Tutzing Gleis 1</div><div class="ab dash" style="left:1290px;top:412px"><i style="left:0"></i><u style="left:11px"></u><i style="left:14px"></i><u style="left:25px"></u><i style="left:28px"></i></div><div class="ab dash" style="left:1431px;top:412px"><i style="left:0"></i><u style="left:11px"></u><i style="left:14px"></i><u style="left:25px"></u><i style="left:28px"></i></div><div class="ab" style="left:961px;top:407px;width:20px;height:18px;border:2px solid #cfcfcf;border-radius:1px"></div><svg class="ab" style="left:990px;top:402px" width="30" height="30" viewBox="0 0 30 30"><rect x="13.6" y="6" width="2" height="17" fill="#8c8c8c"/><path d="M15.5 6 Q18 5 20 8 Q22 10 26 8.2 L26 16.8 Q23 18.5 20.5 15.5 Q18 14 15.5 15.4 Z" fill="#f21c10"/><path d="M20.5 9 Q22.5 10 26 8.2 L26 16.8 Q23 18.5 20.5 15.5 Z" fill="#ff3a12"/></svg><div class="ab" style="left:954px;top:456px;width:708px;height:1px;background:#7d7d7d"></div><div class="t" style="left:1037px;top:435px">Feldafing Gleis 2</div><div class="ab dash" style="left:1290px;top:438px"><i style="left:0"></i><u style="left:11px"></u><i style="left:14px"></i><u style="left:25px"></u><i style="left:28px"></i></div><div class="ab dash" style="left:1431px;top:438px"><i style="left:0"></i><u style="left:11px"></u><i style="left:14px"></i><u style="left:25px"></u><i style="left:28px"></i></div><div class="ab" style="left:961px;top:433px;width:20px;height:18px;border:2px solid #cfcfcf;border-radius:1px"></div><svg class="ab" style="left:990px;top:428px" width="30" height="30" viewBox="0 0 30 30"><rect x="13.6" y="6" width="2" height="17" fill="#8c8c8c"/><path d="M15.5 6 Q18 5 20 8 Q22 10 26 8.2 L26 16.8 Q23 18.5 20.5 15.5 Q18 14 15.5 15.4 Z" fill="#f21c10"/><path d="M20.5 9 Q22.5 10 26 8.2 L26 16.8 Q23 18.5 20.5 15.5 Z" fill="#ff3a12"/></svg><div class="ab" style="left:954px;top:482px;width:708px;height:1px;background:#7d7d7d"></div><div class="t" style="left:1037px;top:461px">Possenhofen Gleis 2</div><div class="ab dash" style="left:1290px;top:464px"><i style="left:0"></i><u style="left:11px"></u><i style="left:14px"></i><u style="left:25px"></u><i style="left:28px"></i></div><div class="ab dash" style="left:1431px;top:464px"><i style="left:0"></i><u style="left:11px"></u><i style="left:14px"></i><u style="left:25px"></u><i style="left:28px"></i></div><div class="ab" style="left:961px;top:459px;width:20px;height:18px;border:2px solid #cfcfcf;border-radius:1px"></div><svg class="ab" style="left:990px;top:454px" width="30" height="30" viewBox="0 0 30 30"><rect x="13.6" y="6" width="2" height="17" fill="#8c8c8c"/><path d="M15.5 6 Q18 5 20 8 Q22 10 26 8.2 L26 16.8 Q23 18.5 20.5 15.5 Q18 14 15.5 15.4 Z" fill="#f21c10"/><path d="M20.5 9 Q22.5 10 26 8.2 L26 16.8 Q23 18.5 20.5 15.5 Z" fill="#ff3a12"/></svg><div class="ab" style="left:954px;top:508px;width:708px;height:1px;background:#7d7d7d"></div><div class="t" style="left:1037px;top:487px">Starnberg Gleis 4</div><div class="ab dash" style="left:1290px;top:490px"><i style="left:0"></i><u style="left:11px"></u><i style="left:14px"></i><u style="left:25px"></u><i style="left:28px"></i></div><div class="ab dash" style="left:1431px;top:490px"><i style="left:0"></i><u style="left:11px"></u><i style="left:14px"></i><u style="left:25px"></u><i style="left:28px"></i></div><div class="ab" style="left:961px;top:485px;width:20px;height:18px;border:2px solid #cfcfcf;border-radius:1px"></div><svg class="ab" style="left:990px;top:480px" width="30" height="30" viewBox="0 0 30 30"><rect x="13.6" y="6" width="2" height="17" fill="#8c8c8c"/><path d="M15.5 6 Q18 5 20 8 Q22 10 26 8.2 L26 16.8 Q23 18.5 20.5 15.5 Q18 14 15.5 15.4 Z" fill="#f21c10"/><path d="M20.5 9 Q22.5 10 26 8.2 L26 16.8 Q23 18.5 20.5 15.5 Z" fill="#ff3a12"/></svg><div class="ab" style="left:954px;top:534px;width:708px;height:1px;background:#7d7d7d"></div><div class="t" style="left:1037px;top:513px">Starnberg Nord Gleis 2</div><div class="ab dash" style="left:1290px;top:516px"><i style="left:0"></i><u style="left:11px"></u><i style="left:14px"></i><u style="left:25px"></u><i style="left:28px"></i></div><div class="ab dash" style="left:1431px;top:516px"><i style="left:0"></i><u style="left:11px"></u><i style="left:14px"></i><u style="left:25px"></u><i style="left:28px"></i></div><div class="ab" style="left:961px;top:511px;width:20px;height:18px;border:2px solid #cfcfcf;border-radius:1px"></div><svg class="ab" style="left:990px;top:506px" width="30" height="30" viewBox="0 0 30 30"><rect x="13.6" y="6" width="2" height="17" fill="#8c8c8c"/><path d="M15.5 6 Q18 5 20 8 Q22 10 26 8.2 L26 16.8 Q23 18.5 20.5 15.5 Q18 14 15.5 15.4 Z" fill="#f21c10"/><path d="M20.5 9 Q22.5 10 26 8.2 L26 16.8 Q23 18.5 20.5 15.5 Z" fill="#ff3a12"/></svg><div class="ab" style="left:954px;top:560px;width:708px;height:1px;background:#7d7d7d"></div><div class="t" style="left:1037px;top:539px">Gauting Ausweichgleis 1</div><div class="ab dash" style="left:1290px;top:542px"><i style="left:0"></i><u style="left:11px"></u><i style="left:14px"></i><u style="left:25px"></u><i style="left:28px"></i></div><div class="ab dash" style="left:1431px;top:542px"><i style="left:0"></i><u style="left:11px"></u><i style="left:14px"></i><u style="left:25px"></u><i style="left:28px"></i></div><div class="ab" style="left:961px;top:537px;width:20px;height:18px;border:2px solid #cfcfcf;border-radius:1px"></div><svg class="ab" style="left:990px;top:532px" width="30" height="30" viewBox="0 0 30 30"><rect x="13.6" y="6" width="2" height="17" fill="#8c8c8c"/><path d="M15.5 6 Q18 5 20 8 Q22 10 26 8.2 L26 16.8 Q23 18.5 20.5 15.5 Q18 14 15.5 15.4 Z" fill="#f21c10"/><path d="M20.5 9 Q22.5 10 26 8.2 L26 16.8 Q23 18.5 20.5 15.5 Z" fill="#ff3a12"/></svg><div class="ab" style="left:954px;top:586px;width:708px;height:1px;background:#7d7d7d"></div><div class="t" style="left:1037px;top:565px">Stockdorf Ausweichgleis 4</div><div class="ab dash" style="left:1290px;top:568px"><i style="left:0"></i><u style="left:11px"></u><i style="left:14px"></i><u style="left:25px"></u><i style="left:28px"></i></div><div class="ab dash" style="left:1431px;top:568px"><i style="left:0"></i><u style="left:11px"></u><i style="left:14px"></i><u style="left:25px"></u><i style="left:28px"></i></div><div class="ab" style="left:961px;top:563px;width:20px;height:18px;border:2px solid #cfcfcf;border-radius:1px"></div><svg class="ab" style="left:990px;top:558px" width="30" height="30" viewBox="0 0 30 30"><rect x="13.6" y="6" width="2" height="17" fill="#8c8c8c"/><path d="M15.5 6 Q18 5 20 8 Q22 10 26 8.2 L26 16.8 Q23 18.5 20.5 15.5 Q18 14 15.5 15.4 Z" fill="#f21c10"/><path d="M20.5 9 Q22.5 10 26 8.2 L26 16.8 Q23 18.5 20.5 15.5 Z" fill="#ff3a12"/></svg><div class="ab" style="left:954px;top:612px;width:708px;height:1px;background:#7d7d7d"></div><div class="t" style="left:1037px;top:591px">Planegg Ausweichgleis 4</div><div class="ab dash" style="left:1290px;top:594px"><i style="left:0"></i><u style="left:11px"></u><i style="left:14px"></i><u style="left:25px"></u><i style="left:28px"></i></div><div class="ab dash" style="left:1431px;top:594px"><i style="left:0"></i><u style="left:11px"></u><i style="left:14px"></i><u style="left:25px"></u><i style="left:28px"></i></div><div class="ab" style="left:961px;top:589px;width:20px;height:18px;border:2px solid #cfcfcf;border-radius:1px"></div><svg class="ab" style="left:990px;top:584px" width="30" height="30" viewBox="0 0 30 30"><rect x="13.6" y="6" width="2" height="17" fill="#8c8c8c"/><path d="M15.5 6 Q18 5 20 8 Q22 10 26 8.2 L26 16.8 Q23 18.5 20.5 15.5 Q18 14 15.5 15.4 Z" fill="#f21c10"/><path d="M20.5 9 Q22.5 10 26 8.2 L26 16.8 Q23 18.5 20.5 15.5 Z" fill="#ff3a12"/></svg><div class="ab" style="left:954px;top:638px;width:708px;height:1px;background:#7d7d7d"></div><div class="t" style="left:1037px;top:617px">Grafelfing Ausweichgleis 4</div><div class="ab dash" style="left:1290px;top:620px"><i style="left:0"></i><u style="left:11px"></u><i style="left:14px"></i><u style="left:25px"></u><i style="left:28px"></i></div><div class="ab dash" style="left:1431px;top:620px"><i style="left:0"></i><u style="left:11px"></u><i style="left:14px"></i><u style="left:25px"></u><i style="left:28px"></i></div><div class="ab" style="left:961px;top:615px;width:20px;height:18px;border:2px solid #cfcfcf;border-radius:1px"></div><svg class="ab" style="left:990px;top:610px" width="30" height="30" viewBox="0 0 30 30"><rect x="13.6" y="6" width="2" height="17" fill="#8c8c8c"/><path d="M15.5 6 Q18 5 20 8 Q22 10 26 8.2 L26 16.8 Q23 18.5 20.5 15.5 Q18 14 15.5 15.4 Z" fill="#f21c10"/><path d="M20.5 9 Q22.5 10 26 8.2 L26 16.8 Q23 18.5 20.5 15.5 Z" fill="#ff3a12"/></svg><div class="ab" style="left:954px;top:664px;width:708px;height:1px;background:#7d7d7d"></div><div class="t" style="left:1037px;top:643px">Westkreuz Ausweichgleis 4</div><div class="ab dash" style="left:1290px;top:646px"><i style="left:0"></i><u style="left:11px"></u><i style="left:14px"></i><u style="left:25px"></u><i style="left:28px"></i></div><div class="ab dash" style="left:1431px;top:646px"><i style="left:0"></i><u style="left:11px"></u><i style="left:14px"></i><u style="left:25px"></u><i style="left:28px"></i></div><div class="ab" style="left:961px;top:641px;width:20px;height:18px;border:2px solid #cfcfcf;border-radius:1px"></div><svg class="ab" style="left:990px;top:636px" width="30" height="30" viewBox="0 0 30 30"><rect x="13.6" y="6" width="2" height="17" fill="#8c8c8c"/><path d="M15.5 6 Q18 5 20 8 Q22 10 26 8.2 L26 16.8 Q23 18.5 20.5 15.5 Q18 14 15.5 15.4 Z" fill="#f21c10"/><path d="M20.5 9 Q22.5 10 26 8.2 L26 16.8 Q23 18.5 20.5 15.5 Z" fill="#ff3a12"/></svg><div class="ab" style="left:954px;top:690px;width:708px;height:1px;background:#7d7d7d"></div><div class="t" style="left:1037px;top:669px">Pasing Gleis 2</div><div class="t" style="left:1290px;top:669px">14:37:41</div><div class="t" style="left:1431px;top:669px">14:38:01</div><div class="ab" style="left:961px;top:667px;width:20px;height:18px;border:2px solid #cfcfcf;border-radius:1px"></div><svg class="ab" style="left:990px;top:662px" width="30" height="30" viewBox="0 0 30 30"><path d="M9.3 16 Q9.3 12.8 12.8 12 L14.2 11.2 L15.8 8 Q17 6.8 17.8 8.2 L16.3 12 L26 12 Q27.6 13.1 26 14.4 L21.6 14.6 Q21.8 18.2 20.5 19.6 Q16 20.6 12 20 Q9.3 18.8 9.3 16 Z" fill="#f4b48e"/><path d="M13 16.5 Q16 17 20 16.5" stroke="#d88a70" stroke-width="0.6" fill="none"/></svg><div class="t" style="left:1037px;top:695px">Pasing Gleis 2</div><div class="t" style="left:1290px;top:695px">14:38:01</div><div class="t" style="left:1431px;top:695px">14:38:01</div><div class="ab" style="left:961px;top:693px;width:20px;height:18px;border:2px solid #cfcfcf;border-radius:1px"></div><svg class="ab" style="left:990px;top:688px" width="30" height="30" viewBox="0 0 30 30"><rect x="16.5" y="7" width="9.5" height="13.5" fill="#1fb2ea"/><path d="M8 11.5 L12 11.5 L12 7 L19.5 14.5 L12 22 L12 17 L8 17 Z" fill="#ffae12" stroke="#0a0a0a" stroke-width="0.6"/></svg><div class="ab" style="left:1618px;top:933px;width:9px;height:147px;background:#5a6488"></div><div class="ab" style="left:954px;top:933px;width:18px;height:17px;background:#525c80"></div><div class="ab" style="left:954px;top:1062px;width:17px;height:18px;background:#4c5474"></div><div class="ab" style="left:960px;top:933px;width:3px;height:147px;background:#1c1c18"></div><div class="ab" style="left:971px;top:1062px;width:647px;height:18px;background:linear-gradient(#4e5a7c,#5c688c 4px)"></div><div class="ab" style="left:954px;top:949.5px;width:710px;height:112.5px;background:linear-gradient(#161e2c 0,#1a2333 45%,#203048 55%,#28364e 100%);opacity:0.92"></div><div class="ab" style="left:1471px;top:965px;width:173px;height:82px;border:1px solid #5c6c8c;background:linear-gradient(#2e3a4c 0,#323e52 55%,#3a4860 60%,#3c4a62 100%)"></div><div class="ab" style="left:1473px;top:967px;width:169px;height:78px;border:1px solid #6a7a98"></div><div class="t" style="left:1539px;top:993px;font-size:24px;line-height:28px;color:#fafafa">OK</div></body></html>
